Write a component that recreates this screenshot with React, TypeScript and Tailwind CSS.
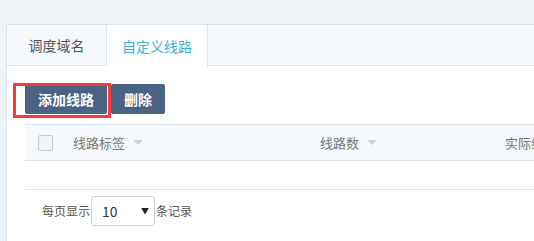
import React from "react";

const font = { fontFamily: '"Noto Sans CJK SC", "Noto Sans", sans-serif' };

const Caret = () => (
  <span className="inline-block ml-[8px] w-0 h-0 border-l-[5px] border-r-[5px] border-t-[5px] border-l-transparent border-r-transparent border-t-[#cfd3d8]" />
);

export default function App() {
  return (
    <div className="w-[534px] h-[241px] overflow-hidden bg-[#eef3f8] pt-[24px] pl-[6px]" style={font}>
      <div className="h-full bg-white border-l border-t border-[#dde3ea]">
        {/* tabs */}
        <div className="flex h-[41px] bg-[#f5f8fc] border-b border-[#dde3ea]">
          <div className="w-[100px] flex items-center justify-center text-[14px] text-[#555] border-r border-[#dde3ea]">
            调度域名
          </div>
          <div className="w-[101px] h-[42px] -mb-px flex items-center justify-center text-[14px] text-[#3ab0d6] bg-white border-r border-[#dde3ea]">
            自定义线路
          </div>
        </div>

        <div className="pl-[18px] pt-[18px]">
          {/* toolbar */}
          <div className="relative flex gap-[4px]">
            <div className="absolute left-[-12px] top-[-1px] w-[98px] h-[35px] border-[3px] border-[#f53b3b]" />
            <button className="w-[82px] h-[30px] rounded-[2px] bg-[#4a6384] text-white text-[14px] font-semibold">
              添加线路
            </button>
            <button className="w-[54px] h-[30px] rounded-[2px] bg-[#4a6384] text-white text-[14px] font-semibold">
              删除
            </button>
          </div>

          {/* table */}
          <div className="mt-[10px] overflow-hidden">
            <div className="flex items-center h-[37px] bg-[#f5f8fc] border-t border-b border-[#dde3ea] text-[13px] text-[#777]">
              <div className="shrink-0 ml-[13px] w-[15px] h-[16px] rounded-[2px] border border-[#c9c9c9] bg-[#f4f4f4]" />
              <div className="shrink-0 ml-[20px] w-[247px] flex items-center">
                线路标签
                <Caret />
              </div>
              <div className="shrink-0 w-[185px] flex items-center">
                线路数
                <Caret />
              </div>
              <div className="shrink-0 whitespace-nowrap">实际线路</div>
            </div>
            <div className="h-[29px] border-b border-[#dde3ea]" />
            <div className="flex items-center pt-[6px] pl-[17px] text-[12px] text-[#555]">
              <span>每页显示</span>
              <div className="ml-[1px] w-[64px] h-[30px] rounded-[3px] border border-[#cfd3d8] flex items-center justify-between pl-[10px] pr-[5px] bg-white">
                <span className="text-[#333] text-[14px]">10</span>
                <span className="text-[8px] text-[#222]">▼</span>
              </div>
              <span className="ml-[1px]">条记录</span>
            </div>
          </div>
        </div>
      </div>
    </div>
  );
}
